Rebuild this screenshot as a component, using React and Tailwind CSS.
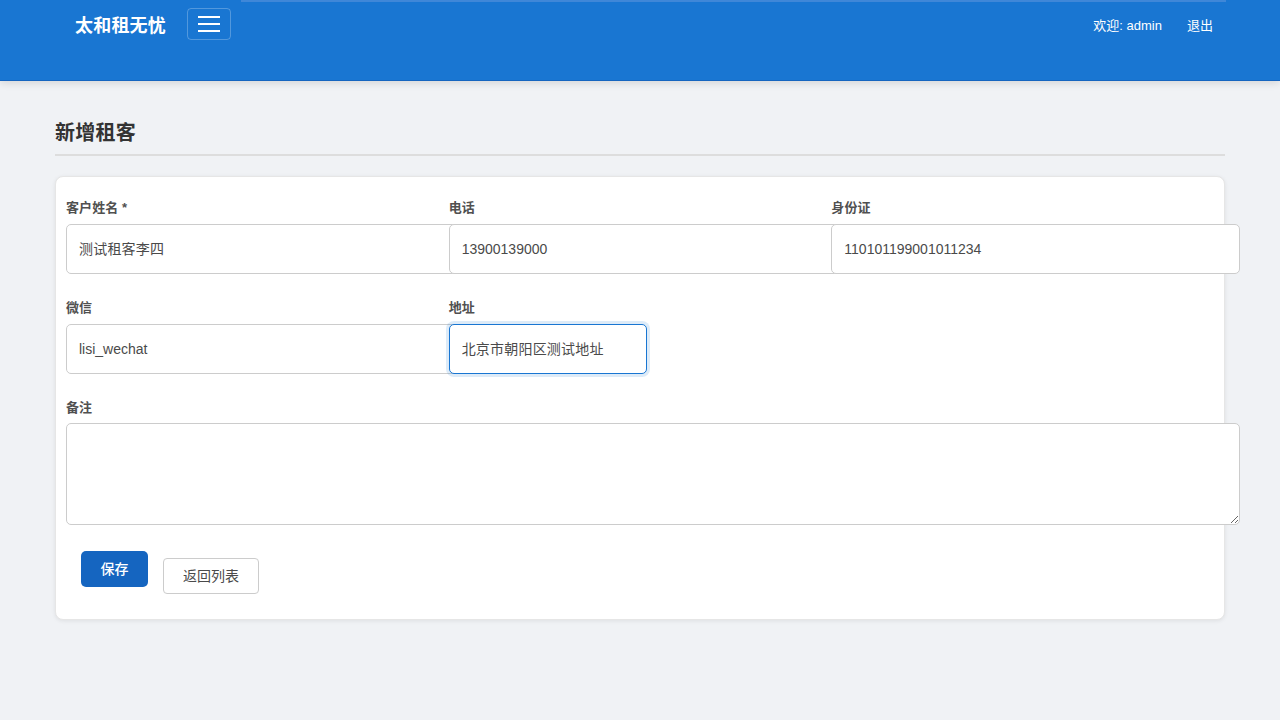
import React from "react";

const FONT = "font-['Liberation_Sans','Noto_Sans_CJK_SC',sans-serif]";

const Field = ({ label, value, focused, cjk }) => (
  <div className="h-[100px] min-w-0">
    <label className="block h-[47px] pt-[23px] text-[13px] leading-[16px] tracking-[0.1px] font-bold text-[#505050]">
      {label}
    </label>
    {focused ? (
      <input
        readOnly
        value={value}
        className="block w-[198px] h-[50px] px-3 pb-[2px] text-sm tracking-[0.2px] text-[#4a4a4a] bg-white border border-[#1976d2] rounded-[5px] outline-none shadow-[0_0_0_3px_rgba(25,118,210,0.15)]"
      />
    ) : cjk ? (
      <input
        readOnly
        value={value}
        className="block box-content w-full h-[46px] px-3 pb-[2px] text-sm tracking-[0.2px] text-[#4a4a4a] bg-white border border-[#cccccc] rounded-[5px] outline-none"
      />
    ) : (
      <input
        readOnly
        value={value}
        className="block box-content w-full h-[48px] px-3 text-sm text-[#4a4a4a] bg-white border border-[#cccccc] rounded-[5px] outline-none"
      />
    )}
  </div>
);

export default function App() {
  return (
    <div className={`min-h-[720px] bg-[#f0f2f5] ${FONT}`}>
      {/* HEADER */}
      <header className="flex h-[81px] pl-[75px] pr-[54px] bg-[#1976d2] border-b border-[#1565c0] shadow-[0_2px_8px_rgba(0,0,0,0.12)]">
        <div className="w-[112px] pt-[15px] text-[18px] leading-[22px] tracking-[0.2px] font-bold text-white">
          太和租无忧
        </div>
        <button className="flex flex-col items-center justify-center gap-[5px] w-[44px] h-[32px] mt-2 border border-white/25 rounded-[4px]">
          <span className="block w-[22px] h-[2px] bg-white" />
          <span className="block w-[22px] h-[2px] bg-white" />
          <span className="block w-[22px] h-[2px] bg-white" />
        </button>
        <nav className="flex flex-1 justify-end gap-[25px] h-[80px] ml-[10px] pt-[15px] pr-[13px] border-t-2 border-[#3f87d8] text-[13px] leading-[17px] text-white">
          <span>欢迎: admin</span>
          <a href="#">退出</a>
        </nav>
      </header>

      <main className="px-[55px]">
        <h2 className="mt-[39px] h-[36px] pt-[1px] text-[20px] leading-[24px] tracking-[0.25px] font-bold text-[#333333] border-b-2 border-[#dddddd]">
          新增租客
        </h2>

        {/* FORM CARD */}
        <div className="mt-[20px] h-[444px] pl-[10px] pr-[10px] bg-white border border-[#e6e6e6] rounded-[8px] shadow-[0_1px_4px_rgba(0,0,0,0.08)]">
          <div className="grid grid-cols-3">
            <Field label="客户姓名 *" value="测试租客李四" cjk />
            <Field label="电话" value="13900139000" />
            <Field label="身份证" value="110101199001011234" />
            <Field label="微信" value="lisi_wechat" />
            <Field label="地址" value="北京市朝阳区测试地址" focused />
          </div>

          <label className="block h-[46px] pt-[23px] text-[13px] leading-[16px] tracking-[0.1px] font-bold text-[#505050]">
            备注
          </label>
          <textarea
            readOnly
            className="block box-content w-full h-[100px] px-3 text-sm bg-white border border-[#cccccc] rounded-[5px] outline-none"
          />

          <div className="flex items-start gap-[15px] mt-[26px] ml-[15px]">
            <button className="w-[67px] h-[36px] text-sm font-medium text-white bg-[#1565c0] rounded-[5px]">
              保存
            </button>
            <button className="w-[96px] h-[36px] mt-[7px] text-sm text-[#4a4a4a] bg-white border border-[#cccccc] rounded-[4px]">
              返回列表
            </button>
          </div>
        </div>
      </main>
    </div>
  );
}
